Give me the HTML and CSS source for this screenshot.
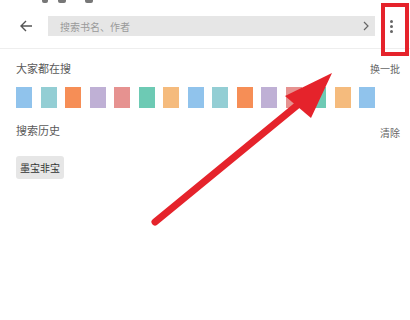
FILE: index.html
```html
<!DOCTYPE html>
<html lang="zh">
<head>
  <meta charset="UTF-8" />
  <title>搜索</title>
  <link rel="stylesheet" href="styles.css">
</head>
<body>

  <div class="status">
    <span class="s1"></span>
    <span class="s2"></span>
    <span class="s3"></span>
  </div>

  <div class="toolbar">
    <svg class="back" width="14" height="14" viewBox="0 0 14 14">
      <path d="M13 7H2M7 2L2 7l5 5" fill="none" stroke="#555" stroke-width="1.4"/>
    </svg>
    <div class="search">
      <span class="placeholder">搜索书名、作者</span>
      <svg width="6" height="10" viewBox="0 0 6 10">
        <path d="M1 1l4 4-4 4" fill="none" stroke="#666" stroke-width="1.2"/>
      </svg>
    </div>
    <div class="more">
      <i></i><i></i><i></i>
    </div>
  </div>

  <div class="section">
    <div class="row">
      <span class="title">大家都在搜</span>
      <span class="action">换一批</span>
    </div>
    <div class="tiles" id="tiles"></div>

    <div class="row history">
      <span class="title">搜索历史</span>
      <span class="action">清除</span>
    </div>
    <div class="tags">
      <span class="tag">墨宝非宝</span>
    </div>
  </div>

  <div class="highlight"></div>

  <svg class="arrow" width="410" height="320" viewBox="0 0 410 320">
    <line x1="155" y1="222" x2="300" y2="103" stroke="#e5232b" stroke-width="7" stroke-linecap="round"/>
    <polygon points="332,73 285,96 311,118" fill="#e5232b"/>
  </svg>

  <script>
    const colores = ['#90c3ec', '#93ced4', '#f68e56', '#bfb0d5', '#e69290', '#6dcab4', '#f5bb7d'];
    const tiles = document.getElementById('tiles');
    for (let i = 0; i < 15; i++) {
      const t = document.createElement('span');
      t.className = 'tile';
      t.style.background = colores[i % colores.length];
      tiles.appendChild(t);
    }
  </script>

</body>
</html>
```

FILE: styles.css
```css
body {
  margin: 0;
  width: 410px;
  height: 320px;
  background: #fff;
  font-family: "Noto Sans CJK SC", "Noto Sans", sans-serif;
  position: relative;
  overflow: hidden;
}

.status {
  height: 4px;
  position: relative;
}

.status span {
  position: absolute;
  top: 0;
  height: 3px;
  background: #777;
  border-radius: 0 0 2px 2px;
}

.s1 { left: 42px; width: 6px; }
.s2 { left: 58px; width: 8px; }
.s3 { left: 85px; width: 8px; }

.toolbar {
  height: 44px;
  display: flex;
  align-items: center;
  border-bottom: 1px solid #eee;
}

.back {
  margin-left: 19px;
  margin-right: 15px;
}

.search {
  width: 327px;
  height: 20px;
  background: #e6e6e6;
  display: flex;
  align-items: center;
  justify-content: space-between;
  padding: 0 6px 0 12px;
  box-sizing: border-box;
}

.placeholder {
  font-size: 10px;
  color: #9a9a9a;
}

.more {
  margin-left: 15px;
  display: flex;
  flex-direction: column;
  gap: 2px;
}

.more i {
  width: 3px;
  height: 3px;
  border-radius: 50%;
  background: #666;
}

.section {
  padding: 0 10px 0 16px;
}

.row {
  display: flex;
  justify-content: space-between;
  align-items: center;
  height: 20px;
  margin-top: 9px;
}

.title {
  font-size: 11px;
  color: #5a5a5a;
}

.action {
  font-size: 10px;
  color: #666;
}

.history {
  margin-top: 12px;
}

.history .action {
  margin-top: 4px;
}

.tiles {
  display: flex;
  gap: 8.5px;
  margin-top: 9px;
}

.tile {
  width: 16px;
  height: 21px;
}

.tags {
  margin-top: 13px;
}

.tag {
  display: inline-block;
  height: 23px;
  line-height: 23px;
  padding: 0 4px;
  font-size: 10px;
  color: #333;
  background: #e6e6e6;
  border-radius: 3px;
}

.highlight {
  position: absolute;
  left: 381px;
  top: 3px;
  width: 20px;
  height: 45px;
  border: 4px solid #e5232b;
}

.arrow {
  position: absolute;
  left: 0;
  top: 0;
}
```
